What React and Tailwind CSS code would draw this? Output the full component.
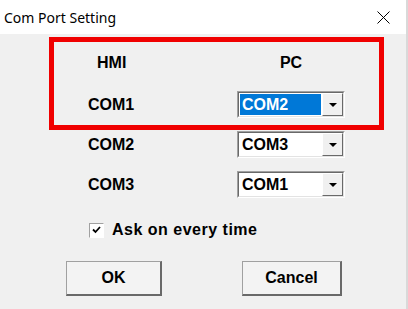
function Combo({ value, selected }) {
  return (
    <div className="h-[27px] w-[108px] border border-t-[#a0a0a0] border-l-[#a0a0a0] border-b-white border-r-white">
      <div className="flex h-full w-full border border-t-[#696969] border-l-[#696969] border-b-[#e3e3e3] border-r-[#e3e3e3] bg-white">
        <div className="flex flex-1 items-stretch p-[1px]">
          <div
            className={
              selected
                ? "flex flex-1 items-center bg-[#0078d7] pl-[2px] text-white"
                : "flex flex-1 items-center pl-[2px] text-black"
            }
          >
            {value}
          </div>
        </div>
        <div className="flex w-[21px] items-center justify-center border border-t-white border-l-white border-b-[#696969] border-r-[#696969] bg-[#f0f0f0]">
          <svg width="8" height="4" viewBox="0 0 8 4">
            <path d="M0 0H8L4 4Z" fill="#000" />
          </svg>
        </div>
      </div>
    </div>
  )
}

function Row({ label, value, selected }) {
  return (
    <div className="flex h-[27px] items-center pl-[88px]">
      <span className="w-[149px]">{label}</span>
      <Combo value={value} selected={selected} />
    </div>
  )
}

function Button({ children, width }) {
  return (
    <div
      className={
        "flex h-[35px] items-center justify-center border border-t-[#a0a0a0] border-l-[#a0a0a0] border-b-2 border-r-2 border-b-[#696969] border-r-[#696969] bg-[#f3f3f3] " +
        width
      }
    >
      {children}
    </div>
  )
}

function App() {
  return (
    <div className="relative h-[309px] w-[408px] overflow-hidden bg-[#f0f0f0] font-['Liberation_Sans',Arial,sans-serif] text-[16px] font-bold text-black">
      <div className="flex h-[34px] items-center justify-between bg-white pl-[4px] pr-[18px] font-['Noto_Sans',sans-serif] text-[14px] font-normal">
        <span>Com Port Setting</span>
        <svg width="13" height="13" viewBox="0 0 13 13">
          <path d="M0.5 0.5L12.5 12.5M12.5 0.5L0.5 12.5" stroke="#000" strokeWidth="1" />
        </svg>
      </div>

      <div className="mt-[8px] flex h-[41px] items-center pl-[97px]">
        <span className="w-[140px]">HMI</span>
        <span className="w-[108px] text-center">PC</span>
      </div>

      <div className="mt-[8px] flex flex-col gap-[13px]">
        <Row label="COM1" value="COM2" selected />
        <Row label="COM2" value="COM3" />
        <Row label="COM3" value="COM1" />
      </div>

      <div className="mt-[22px] flex h-[20px] items-center pl-[89px]">
        <div className="flex h-[15px] w-[15px] items-center justify-center border border-t-[#a0a0a0] border-l-[#a0a0a0] border-b-white border-r-white bg-white">
          <svg width="9" height="8" viewBox="0 0 9 8">
            <path d="M1 3.5L3.5 6L8 1" stroke="#000" strokeWidth="1.8" fill="none" />
          </svg>
        </div>
        <span className="ml-[8px] tracking-[0.5px]">Ask on every time</span>
      </div>

      <div className="mt-[21px] flex pl-[66px]">
        <Button width="w-[96px]">OK</Button>
        <div className="w-[80px]" />
        <Button width="w-[100px]">Cancel</Button>
      </div>

      <div className="absolute left-[49px] top-[37px] h-[93px] w-[335px] border-[5px] border-[#f00000]" />
      <div className="absolute right-0 top-0 h-full w-[2px] bg-[#d9d9d9]" />
    </div>
  )
}

export default App
